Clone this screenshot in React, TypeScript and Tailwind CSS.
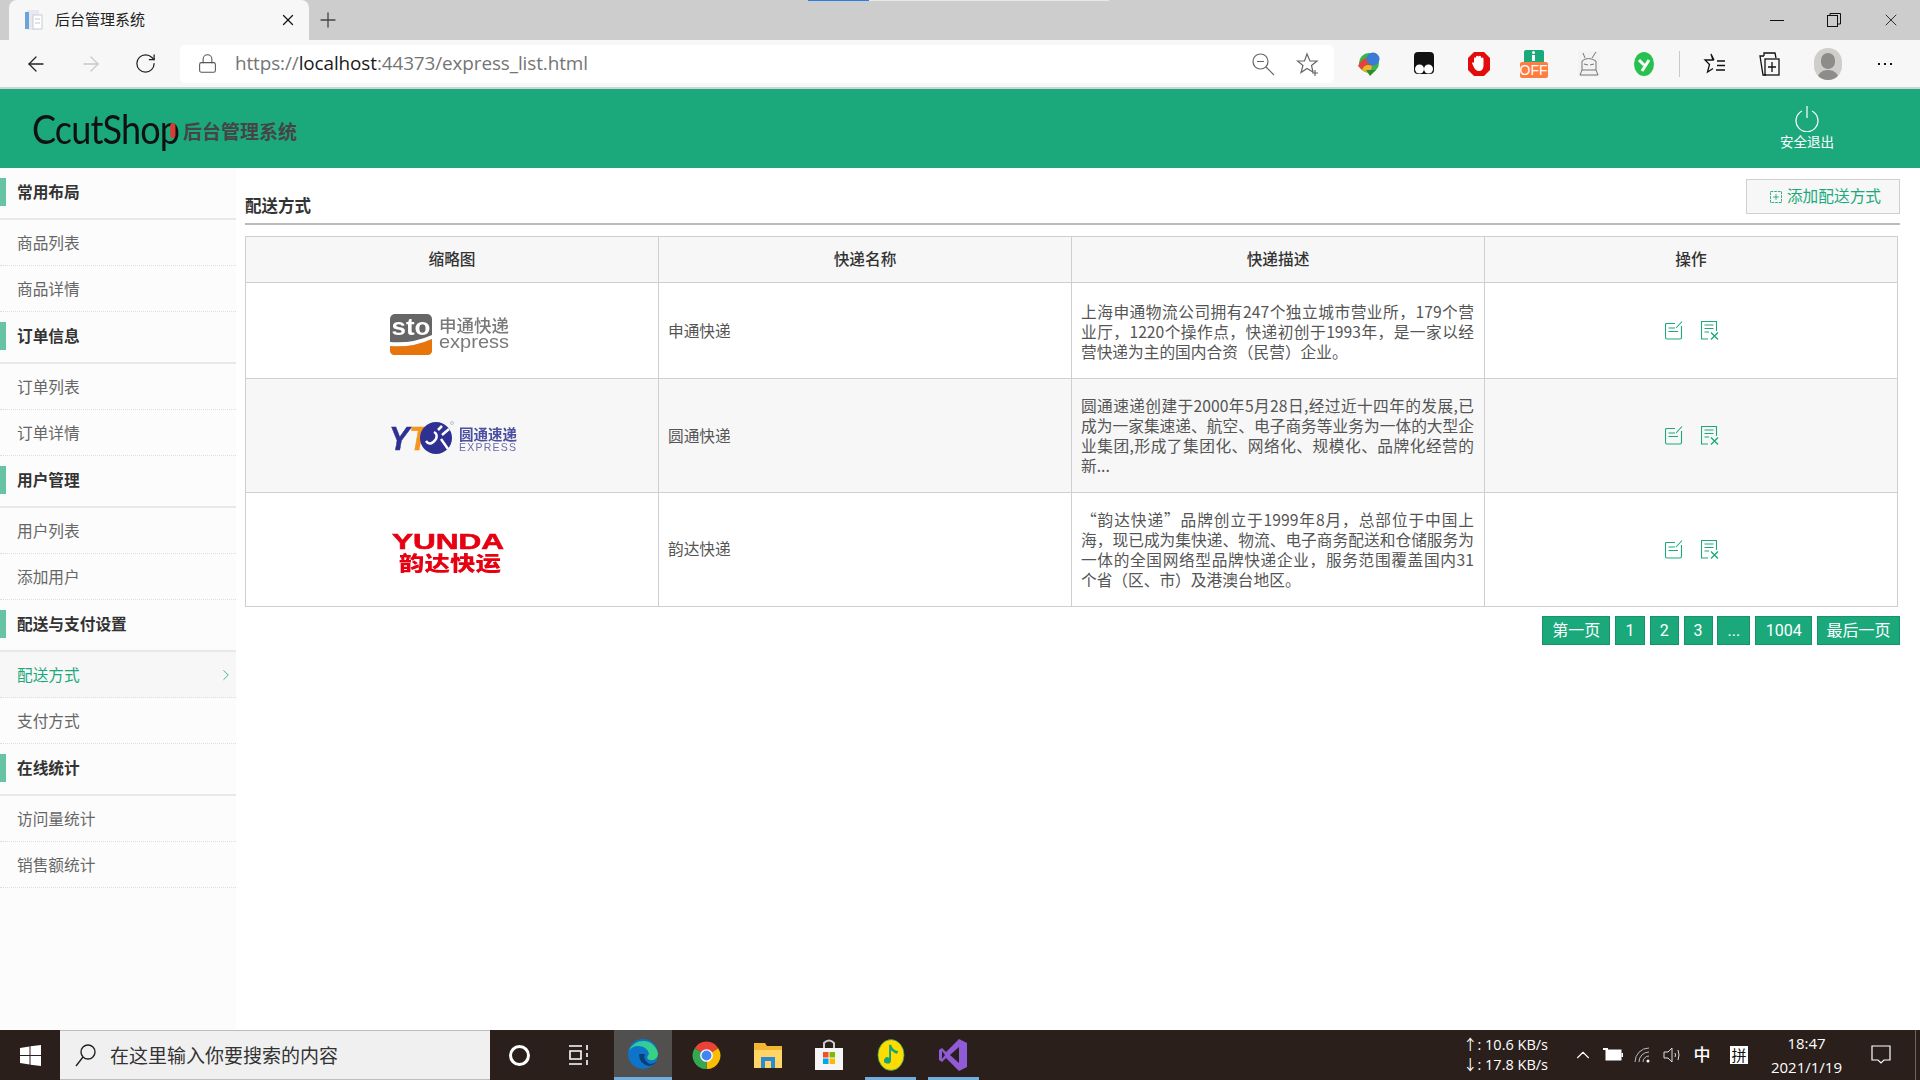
import React from "react";
import { ArrowLeft, ArrowRight, RotateCw, Lock, X, Plus, ChevronRight, ChevronUp } from "lucide-react";

const groups = [
  { title: "常用布局", items: ["商品列表", "商品详情"] },
  { title: "订单信息", items: ["订单列表", "订单详情"] },
  { title: "用户管理", items: ["用户列表", "添加用户"] },
  { title: "配送与支付设置", items: ["配送方式", "支付方式"] },
  { title: "在线统计", items: ["访问量统计", "销售额统计"] },
];

const StoLogo = () => (
  <svg width="140" height="60" viewBox="0 0 140 60" className="block mx-auto blur-[0.3px]">
    <rect x="8" y="13" width="42" height="41" rx="5" fill="#666666" />
    <path d="M8 45 Q30 47 50 38 V49 Q50 54 45 54 H13 Q8 54 8 49 Z" fill="#e8740c" />
    <path d="M8 41 Q30 43 50 34 V38 Q30 47 8 45 Z" fill="#ffffff" />
    <text x="9.500" y="34" fontFamily="Liberation Sans" fontWeight="700" fontSize="23" fill="#fff" textLength="39" lengthAdjust="spacingAndGlyphs">sto</text>
    <text x="57" y="31" fontFamily="Noto Sans CJK SC" fontWeight="500" fontSize="17.500" fill="#7a7a7a">申通快递</text>
    <text x="57" y="47" fontFamily="Liberation Sans" fontSize="19" fill="#7a7a7a" textLength="70" lengthAdjust="spacingAndGlyphs">express</text>
  </svg>
);

const YtoLogo = () => (
  <svg width="140" height="60" viewBox="0 0 140 60" className="block mx-auto blur-[0.3px]">
    <text x="7" y="44" fontFamily="Liberation Sans" fontWeight="700" fontStyle="italic" fontSize="34" stroke="#2e3192" strokeWidth="0.500" fill="#2e3192" textLength="39" lengthAdjust="spacingAndGlyphs">Y<tspan fill="#f7941d" stroke="#f7941d">T</tspan></text>
    <circle cx="54" cy="32" r="16" fill="#2e3192" />
    <path d="M44 35 Q48 41 54 33 Q56 28 52 26" fill="none" stroke="#fff" strokeWidth="2.500" />
    <path d="M56 24 L60 20 M60 29 L67 23 M59 33 L66 43" fill="none" stroke="#fff" strokeWidth="2.500" />
    <circle cx="70" cy="17" r="1.500" fill="none" stroke="#9a9ab5" strokeWidth="0.600" />
    <text x="77" y="34" fontFamily="Noto Sans CJK SC" fontWeight="700" fontSize="14.500" fill="#4a4f9f">圆通速递</text>
    <text x="77" y="45" fontFamily="Liberation Sans" fontSize="10.500" fill="#6a6ea8" textLength="57">EXPRESS</text>
  </svg>
);

const YundaLogo = () => (
  <svg width="140" height="60" viewBox="0 0 140 60" className="block mx-auto blur-[0.3px]">
    <text x="10" y="29" fontFamily="Liberation Sans" fontWeight="700" fontSize="22" fill="#e60012" textLength="112" lengthAdjust="spacingAndGlyphs" stroke="#e60012" strokeWidth="0.600">YUNDA</text>
    <text x="17" y="51" fontFamily="Noto Sans CJK SC" fontWeight="900" fontSize="20" fill="#e60012" textLength="102" lengthAdjust="spacingAndGlyphs">韵达快运</text>
  </svg>
);

const EditIcon = () => (
  <svg width="18" height="19" viewBox="0 0 18 19" fill="none" stroke="#1ba97c" strokeWidth="1.100">
    <path d="M10 2.500 H1.500 Q0.500 2.500 0.500 3.500 V16.500 Q0.500 18 2 18 H15 Q16.500 18 16.500 16.500 V5" />
    <path d="M11 7 L17 0.500" />
    <path d="M3.500 7 H10 M3.500 10.500 H13" />
  </svg>
);

const DeleteIcon = () => (
  <svg width="18" height="19" viewBox="0 0 18 19" fill="none" stroke="#1ba97c" strokeWidth="1.100">
    <path d="M7 18 H0.500 V0.500 H15.500 V10" />
    <path d="M3.500 4 H12.500 M3.500 7.500 H12.500 M3.500 11 H8" />
    <path d="M10 11.500 L17 18.500 M17 11.500 L10 18.500" strokeWidth="1.400" />
  </svg>
);

const Actions = () => (
  <div className="flex justify-center gap-[18px] pl-[2px] pb-[1px]">
    <EditIcon />
    <DeleteIcon />
  </div>
);

const rows = [
  {
    logo: <StoLogo />,
    name: "申通快递",
    desc: "上海申通物流公司拥有247个独立城市营业所\uFF0C179个营业厅\uFF0C1220个操作点\uFF0C快递初创于1993年\uFF0C是一家以经营快递为主的国内合资\uFF08民营\uFF09企业\u3002",
    tr: "h-[96px] bg-white",
    nameTd: "border border-[#cfcfcf] pt-[18px] pb-[15px] px-[9px]",
    descTd: "border border-[#cfcfcf] pt-[18px] pb-[15px] pl-[9px] pr-[10px] leading-[20px] text-justify font-['Noto_Sans_CJK_SC',sans-serif]",
  },
  {
    logo: <YtoLogo />,
    name: "圆通快递",
    desc: "圆通速递创建于2000年5月28日,经过近十四年的发展,已成为一家集速递\u3001航空\u3001电子商务等业务为一体的大型企业集团,形成了集团化\u3001网络化\u3001规模化\u3001品牌化经营的新...",
    tr: "h-[114px] bg-[#f7f7f7]",
    nameTd: "border border-[#cfcfcf] pt-[18px] pb-[15px] px-[9px]",
    descTd: "border border-[#cfcfcf] pt-[17px] pb-[16px] pl-[9px] pr-[10px] leading-[20px] text-justify font-['Noto_Sans_CJK_SC',sans-serif]",
  },
  {
    logo: <YundaLogo />,
    name: "韵达快递",
    desc: "\u201C韵达快递\u201D品牌创立于1999年8月\uFF0C总部位于中国上海\uFF0C现已成为集快递\u3001物流\u3001电子商务配送和仓储服务为一体的全国网络型品牌快递企业\uFF0C服务范围覆盖国内31个省\uFF08区\u3001市\uFF09及港澳台地区\u3002",
    tr: "h-[114px] bg-white",
    nameTd: "border border-[#cfcfcf] pt-[17px] pb-[16px] px-[9px]",
    descTd: "border border-[#cfcfcf] pt-[17px] pb-[16px] pl-[9px] pr-[10px] leading-[20px] text-justify font-['Noto_Sans_CJK_SC',sans-serif]",
  },
];

const pages = [
  { t: "第一页", c: "w-[68px]" },
  { t: "1", c: "w-[30px]" },
  { t: "2", c: "w-[29px]" },
  { t: "3", c: "w-[29px]" },
  { t: "...", c: "w-[33px]" },
  { t: "1004", c: "w-[57px]" },
  { t: "最后一页", c: "w-[83px]" },
];

const Slot = ({ children }: { children: React.ReactNode }) => (
  <div className="w-[55px] h-full flex items-center justify-center shrink-0">{children}</div>
);

const Toolbar = () => (
  <div className="h-[49px] bg-[#f7f7f7] border-b-2 border-[#d2d2d2] flex items-center shrink-0">
    <div className="w-[180px] flex items-center pl-[8px] shrink-0">
      <Slot><ArrowLeft size={24} strokeWidth={1.3} color="#222" /></Slot>
      <Slot><ArrowRight size={24} strokeWidth={1.3} color="#c8c8c8" /></Slot>
      <Slot><RotateCw size={23} strokeWidth={1.3} color="#222" /></Slot>
    </div>
    <div className="w-[1154px] h-[38px] bg-white rounded-[5px] flex items-center shrink-0">
      <div className="w-[55px] flex justify-center"><Lock size={21} strokeWidth={1.2} color="#555" /></div>
      <div className="text-[18.900px] text-[#757575] font-['Open_Sans',sans-serif] tracking-[-0.1px]">
        https://<span className="text-[#1a1a1a]">localhost</span>:44373/express_list.html
      </div>
      <div className="ml-auto flex items-center gap-[21px] pr-[14px]">
        <svg width="24" height="24" viewBox="0 0 24 24" fill="none" stroke="#666" strokeWidth="1.200"><circle cx="9.500" cy="9.500" r="7.500" /><path d="M15 15 L23 23 M6 9.500 H13" /></svg>
        <svg width="24" height="24" viewBox="0 0 24 24" fill="none" stroke="#666" strokeWidth="1.200"><path d="M11 2 L14 9 H21 L15.500 13.500 L17 20 L11 16.500 L5 20.500 L7 13.500 L1.500 9 H8.500 Z" /><path d="M19 18 V24 M16 21 H22" /></svg>
      </div>
    </div>
    <div className="flex items-center h-full pl-[7px]">
      <Slot>
        <svg width="24" height="26" viewBox="0 0 24 26">
          <circle cx="12" cy="12" r="10" fill="#39b54a" />
          <path d="M1 15 Q6 4 17 8 L15 15 Q8 12 5 19 Z" fill="#e2433b" />
          <path d="M5 19 Q8 12 15 15 L13 23 Z" fill="#f0b429" />
          <circle cx="16" cy="8" r="6.500" fill="#3a7bd5" />
          <path d="M9 19 H19 L13 25 Z" fill="#2e8b2e" />
        </svg>
      </Slot>
      <Slot>
        <svg width="24" height="25" viewBox="0 0 24 25">
          <rect x="2" y="1" width="20" height="22" rx="4" fill="#111" />
          <circle cx="7.500" cy="18" r="4.500" fill="#fff" />
          <circle cx="16.500" cy="18" r="4.500" fill="#fff" />
        </svg>
      </Slot>
      <Slot>
        <svg width="24" height="26" viewBox="0 0 24 26">
          <path d="M7 1 H17 L23 7 V19 L17 25 H7 L1 19 V7 Z" fill="#e30b0b" />
          <path d="M7 12 V7 Q8 5.500 9 7 V5.500 Q10.500 4 11.500 5.500 Q13 4 14 5.500 V7 Q15.500 6 16.500 7.500 V15 Q16 20 12 20 Q8.500 20 6.500 15.500 L5 12 Q6 10.500 7 12 Z" fill="#fff" />
        </svg>
      </Slot>
      <Slot>
        <div className="w-[28px] h-[28px] flex flex-col items-center">
          <div className="w-[20px] h-[12px] bg-[#1ba97c] rounded-t-[2px] flex flex-col items-center gap-[1px]">
            <div className="w-[3px] h-[3px] bg-white rounded-full mt-[1px]" />
            <div className="w-[3px] h-[6px] bg-white" />
          </div>
          <div className="w-[28px] h-[16px] bg-[#ff7d3f] rounded-[2px] text-white text-[14px] leading-[16px] text-center font-['Liberation_Sans',sans-serif]">OFF</div>
        </div>
      </Slot>
      <Slot>
        <svg width="22" height="26" viewBox="0 0 22 26" fill="none" stroke="#666" strokeWidth="0.900">
          <rect width="22" height="26" fill="#f3f3f3" stroke="none" />
          <path d="M7 7 L5 2 M14 7 L18 1 M4 10 Q10 5 18 10 L18 19 H4 Z M6 13 L10 14 M12 14 L16 13 M2 24 H20 M4 19 L2 24 M18 19 L20 24" />
        </svg>
      </Slot>
      <Slot>
        <svg width="22" height="26" viewBox="0 0 22 26">
          <ellipse cx="11" cy="13" rx="10" ry="12" fill="#28c04e" />
          <path d="M6 9 L11 14 M16 9 L9 20" stroke="#fff" strokeWidth="3" fill="none" />
        </svg>
      </Slot>
      <div className="w-[1px] h-[26px] bg-[#c9c9c9] ml-[8px] mr-[7px]" />
      <Slot>
        <svg width="24" height="24" viewBox="0 0 24 24" fill="none" stroke="#111" strokeWidth="1.300">
          <path d="M8 2 L10 8 H2 L6.500 12.500 L4.500 20 L10 16.500 M8 2 L11 8 M14 9 H22 M14 13.500 H22 M13 18 H22" />
        </svg>
      </Slot>
      <Slot>
        <svg width="24" height="26" viewBox="0 0 24 26" fill="none" stroke="#111" strokeWidth="1.300">
          <path d="M6 5 V2 H17 L18 7 M6 5 H2 L5 24 H8" />
          <rect x="7" y="8" width="14" height="16" />
          <path d="M14 11 V21 M10 16 H18" />
        </svg>
      </Slot>
      <div className="w-[3px] shrink-0" />
      <Slot>
        <div className="w-[28px] h-[32px] rounded-full bg-[#cfcecb] flex flex-col items-center justify-end overflow-hidden">
          <div className="w-[14px] h-[16px] rounded-full bg-[#8e8c8a]" />
          <div className="w-[22px] h-[10px] mt-[1px] rounded-t-full bg-[#8e8c8a]" />
        </div>
      </Slot>
      <div className="w-[2px] shrink-0" />
      <Slot>
        <div className="flex gap-[4px]">
          <div className="w-[2px] h-[2px] bg-[#111]" />
          <div className="w-[2px] h-[2px] bg-[#111]" />
          <div className="w-[2px] h-[2px] bg-[#111]" />
        </div>
      </Slot>
    </div>
  </div>
);

const Taskbar = () => (
  <div className="h-[50px] bg-[#2a1f1b] flex items-center shrink-0 relative font-['Open_Sans','Noto_Sans_CJK_SC',sans-serif]">
    <div className="w-[60px] flex justify-center">
      <svg width="21" height="21" viewBox="0 0 21 21" fill="#fff"><path d="M0 3 L9.500 1.500 V10 H0 Z M10.500 1.300 L21 0 V10 H10.500 Z M0 11 H9.500 V19.500 L0 18 Z M10.500 11 H21 V21 L10.500 19.700 Z" /></svg>
    </div>
    <div className="w-[430px] h-full bg-[#f0f0f0] border-y border-[#bdbdbd] flex items-center">
      <svg className="ml-[14px]" width="24" height="24" viewBox="0 0 24 24" fill="none" stroke="#222" strokeWidth="1.400"><circle cx="14" cy="9" r="7" /><path d="M9 14 L2 23" /></svg>
      <span className="ml-[12px] text-[19px] text-[#333] font-['Noto_Sans_CJK_SC',sans-serif]">在这里输入你要搜索的内容</span>
    </div>
    <div className="w-[58px] flex justify-center">
      <div className="w-[21px] h-[21px] rounded-full border-[3px] border-white" />
    </div>
    <div className="w-[66px] flex justify-center pr-[4px]">
      <svg width="22" height="22" viewBox="0 0 22 22" fill="none" stroke="#fff" strokeWidth="1.600"><path d="M1 2 H14 M1 20 H14 M2 7 H13 V15 H2 Z M19 1 V6 M19 9 V13 M19 16 V21" /></svg>
    </div>
    <div className="w-[58px] h-full bg-[#52504e] border-b-[3px] border-[#6eaee0] flex items-center justify-center">
      <svg width="32" height="32" viewBox="0 0 32 32">
        <defs>
          <linearGradient id="edgeA" x1="0" y1="0" x2="1" y2="1"><stop offset="0" stopColor="#2dc9a8" /><stop offset="1" stopColor="#3bd47a" /></linearGradient>
        </defs>
        <circle cx="16" cy="16" r="15" fill="#0d74c9" />
        <path d="M2 13 A15 15 0 0 1 31 16 Q30 23 23 22 Q18 21 22 16 Q20 8 11 8 Q5 8 2 13 Z" fill="url(#edgeA)" />
        <path d="M12 16 Q12 26 22 28 Q27 27 29 24 Q23 28 20 24 Q16 20 18 16 Z" fill="#0b3f78" />
      </svg>
    </div>
    <div className="w-[62px] ml-[3px] flex justify-center">
      <svg width="29" height="29" viewBox="0 0 32 32">
        <path d="M16 16 L3 8 A15 15 0 0 1 29 8 Z" fill="#ea4335" />
        <path d="M16 16 L29 8 A15 15 0 0 1 16 31 Z" fill="#fbbc05" />
        <path d="M16 16 L16 31 A15 15 0 0 1 3 8 Z" fill="#34a853" />
        <circle cx="16" cy="16" r="7" fill="#fff" />
        <circle cx="16" cy="16" r="5.500" fill="#4285f4" />
      </svg>
    </div>
    <div className="w-[60px] ml-[1px] flex justify-center">
      <svg width="30" height="28" viewBox="0 0 30 28">
        <path d="M1 2 H12 L14 5 H29 V27 H1 Z" fill="#f2b632" />
        <path d="M1 9 H29 V27 H1 Z" fill="#ffd666" />
        <path d="M8 27 V16 H22 V27 H18 V20 H12 V27 Z" fill="#2a8ad4" />
      </svg>
    </div>
    <div className="w-[62px] flex justify-center">
      <svg width="30" height="32" viewBox="0 0 30 32">
        <path d="M10 9 V4 Q15 -1 20 4 V9" fill="none" stroke="#ccc" strokeWidth="2" />
        <path d="M1 9 H29 V31 H1 Z" fill="#f5f5f5" />
        <rect x="9" y="13" width="5.500" height="5.500" fill="#f25022" />
        <rect x="15.500" y="13" width="5.500" height="5.500" fill="#7fba00" />
        <rect x="9" y="19.500" width="5.500" height="5.500" fill="#00a4ef" />
        <rect x="15.500" y="19.500" width="5.500" height="5.500" fill="#ffb900" />
      </svg>
    </div>
    <div className="w-[62px] h-full flex items-center justify-center relative">
      <svg width="28" height="34" viewBox="0 0 30 34">
        <ellipse cx="15" cy="17" rx="14" ry="16.500" fill="#ffdc00" stroke="#1d9e6b" strokeWidth="0.800" />
        <path d="M15 6 V22 Q15 27 10 26 Q6 25 8 21 Q10 18 13 20 V6 Z M15 6 Q17 12 23 13 L21 16 Q17 14 15 12 Z" fill="#12a579" />
      </svg>
      <div className="absolute bottom-0 left-[5px] w-[51px] h-[3px] bg-[#6eaee0]" />
    </div>
    <div className="w-[62px] h-full flex items-center justify-center relative">
      <svg width="30" height="34" viewBox="0 0 30 34">
        <path d="M21 1 L29 5 V29 L21 33 L8 20 L4 24 L1 22 V12 L4 10 L8 14 Z" fill="#8f5bd6" />
        <path d="M21 9 L12 17 L21 25 Z" fill="#2a1f1b" />
        <path d="M4 13 L7 17 L4 21 Z" fill="#2a1f1b" />
      </svg>
      <div className="absolute bottom-0 left-[6px] w-[51px] h-[3px] bg-[#6eaee0]" />
    </div>
    <div className="ml-auto flex items-center h-full text-white">
      <div className="w-[82px] text-[14.500px] leading-[20px] mr-[24px] whitespace-nowrap">
        <div>↑: 10.6 KB/s</div>
        <div>↓: 17.8 KB/s</div>
      </div>
      <div className="w-[28px] flex justify-center"><ChevronUp size={22} strokeWidth={1.2} color="#fff" /></div>
      <div className="w-[32px] flex justify-center">
        <svg width="20" height="14" viewBox="0 0 20 14"><rect x="3" y="2" width="15" height="10" fill="#fff" stroke="#fff" /><rect x="18.500" y="5" width="1.500" height="4" fill="#fff" /><path d="M0 1 H5" stroke="#fff" strokeWidth="2" /></svg>
      </div>
      <div className="w-[28px] flex justify-center">
        <svg width="18" height="16" viewBox="0 0 18 16" fill="none" stroke="#bbb" strokeWidth="1"><path d="M1 15 A14 14 0 0 1 15 1 M5 15 A10 10 0 0 1 15 5 M9 15 A6 6 0 0 1 15 9" /><circle cx="14" cy="14" r="1.500" fill="#fff" stroke="none" /></svg>
      </div>
      <div className="w-[31px] flex justify-center">
        <svg width="20" height="16" viewBox="0 0 20 16" fill="none" stroke="#ddd" strokeWidth="1"><path d="M1 5 H5 L9 1 V15 L5 11 H1 Z M12 6 Q13 8 12 10 M15 3 Q17 8 15 13" /></svg>
      </div>
      <div className="w-[28px] text-center text-[17px] font-medium">中</div>
      <div className="w-[46px] flex justify-center">
        <div className="w-[18px] h-[18px] bg-white text-[#111] text-[15px] leading-[18px] text-center">拼</div>
      </div>
      <div className="w-[89px] text-[15px] leading-[24px] text-center">
        <div>18:47</div>
        <div>2021/1/19</div>
      </div>
      <div className="w-[59px] flex justify-center">
        <svg width="20" height="20" viewBox="0 0 20 20" fill="none" stroke="#fff" strokeWidth="1.200"><path d="M1 1 H19 V15 H13 L10 18 L7 15 H1 Z" /></svg>
      </div>
      <div className="w-[10px] h-full flex justify-center"><div className="w-[1px] h-full bg-[#6d6560]" /></div>
    </div>
  </div>
);

export default function App() {
  return (
    <div className="w-full h-screen flex flex-col overflow-hidden bg-white font-['Roboto','Noto_Sans_CJK_SC',sans-serif] text-[15.700px] text-[#555]">
      <div className="h-10 bg-[#cdcdcd] flex pl-[9px] shrink-0 relative">
        <div className="absolute top-0 left-[808px] w-[61px] h-[1px] bg-[#2a7de1]" />
        <div className="absolute top-0 left-[869px] w-[240px] h-[1px] bg-[#e8e8e8]" />
        <div className="w-[300px] h-10 bg-[#f7f7f7] rounded-t-lg flex items-center">
          <svg className="ml-[15px]" width="20" height="22" viewBox="0 0 20 22">
            <rect x="3" y="1" width="12" height="20" fill="#e6e9ee" />
            <rect x="1" y="3" width="4" height="17" fill="#6aa5da" />
            <rect x="9" y="6" width="9" height="14" fill="#fff" stroke="#c8ccd4" />
            <path d="M11 10 H16 M11 14 H16" stroke="#c0c6d0" />
          </svg>
          <span className="ml-[11px] text-[15px] text-[#222]">后台管理系统</span>
          <X className="ml-auto mr-[12px]" size={18} strokeWidth={1.6} color="#111" />
        </div>
        <div className="w-[38px] flex items-center justify-center">
          <Plus size={24} strokeWidth={1.3} color="#444" />
        </div>
        <div className="ml-auto flex items-center pr-[1px]">
          <div className="w-[57px] flex justify-center"><div className="w-[14px] h-[1px] bg-[#111]" /></div>
          <div className="w-[57px] flex justify-center">
            <svg width="14" height="14" viewBox="0 0 14 14" fill="none" stroke="#111" strokeWidth="1"><rect x="0.500" y="2.500" width="10" height="11" /><path d="M3 2.500 V0.500 H13.500 V11 H10.500" /></svg>
          </div>
          <div className="w-[57px] flex justify-center"><X size={20} strokeWidth={1} color="#111" /></div>
        </div>
      </div>

      <Toolbar />

      <div className="h-[79px] bg-[#1ba97c] flex items-center shrink-0 pl-[32px] relative">
        <div className="w-[149px] relative text-[41px] leading-none text-[#111] font-['Lato',sans-serif] tracking-[-1px] -mt-[1px] scale-x-[0.88] origin-left whitespace-nowrap">
          CcutShop
          <div className="absolute left-[157px] top-[15px] w-[6px] h-[15px] rounded-full bg-[#d33f35]" />
        </div>
        <div className="ml-[2px] mt-[9px] text-[19px] font-bold text-[#454545]">后台管理系统</div>
        <div className="ml-auto mr-[86px] flex flex-col items-center text-white text-[13.500px] leading-[16px] -mt-[1px]">
          <svg width="26" height="26" viewBox="0 0 26 26" fill="none" stroke="#fff" strokeWidth="1.200"><path d="M8 5 A11 11 0 1 0 18 5 M13 0 V12" /></svg>
          <span className="mt-[2px]">安全退出</span>
        </div>
      </div>

      <div className="flex-1 flex min-h-0">
        <aside className="w-[236px] shrink-0 bg-[#fcfcfc]">
          {groups.map((g) => (
            <div key={g.title}>
              <div className="h-[52px] border-b-2 border-[#e8e8e8] flex items-center font-bold text-[#333]">
                <div className="w-[6px] h-[28px] bg-[#66c3a4] -mt-[2px]" />
                <span className="ml-[11px]">{g.title}</span>
              </div>
              {g.items.map((it) => {
                const active = it === "配送方式";
                return (
                  <div key={it} className={active ? "h-[46px] border-b border-dotted border-[#ddd] flex items-center pl-[17px] pt-[2px] bg-[#f7f7f7] text-[#1ba97c]" : "h-[46px] border-b border-dotted border-[#ddd] flex items-center pl-[17px] pt-[2px] text-[#666]"}>
                    <span>{it}</span>
                    {active && <ChevronRight className="ml-auto mr-[1px] -mt-[2px]" size={18} strokeWidth={1.1} color="#1ba97c" />}
                  </div>
                );
              })}
            </div>
          ))}
        </aside>

        <main className="flex-1 pl-[9px] pr-[20px] pt-[11px]">
          <div className="h-[46px] border-b-2 border-[#bbb] flex justify-between">
            <div className="pt-[16px] font-bold text-[#333] text-[16.500px]">配送方式</div>
            <div className="w-[154px] h-[35px] border border-[#cfcfcf] bg-[#f7f7f7] text-[#1ba97c] flex items-center justify-center gap-[5px] pl-[5px]">
              <svg width="12" height="12" viewBox="0 0 13 13" fill="none" stroke="#1ba97c" strokeWidth="1"><rect x="0.500" y="0.500" width="12" height="12" strokeDasharray="3 1" /><path d="M6.500 3.500 V9.500 M3.500 6.500 H9.500" /></svg>
              <span className="mt-[1px]">添加配送方式</span>
            </div>
          </div>
          <table className="w-[1653px] mt-[11px] table-fixed border-collapse">
            <thead>
              <tr className="h-[46px] bg-[#f7f7f7] text-[#333]">
                {["缩略图", "快递名称", "快递描述", "操作"].map((h) => (
                  <th key={h} className="border border-[#cfcfcf] font-medium text-center">{h}</th>
                ))}
              </tr>
            </thead>
            <tbody>
              {rows.map((r) => (
                <tr key={r.name} className={r.tr}>
                  <td className="border border-[#cfcfcf] p-0">{r.logo}</td>
                  <td className={r.nameTd}>{r.name}</td>
                  <td className={r.descTd}>{r.desc}</td>
                  <td className="border border-[#cfcfcf] p-0"><Actions /></td>
                </tr>
              ))}
            </tbody>
          </table>
          <div className="mt-[9px] flex justify-end gap-[4.800px]">
            {pages.map((p) => (
              <div key={p.t} className={"h-[29px] bg-[#1ba97c] border border-[#17936c] text-white text-center text-[16px] leading-[27px] " + p.c}>{p.t}</div>
            ))}
          </div>
        </main>
      </div>

      <Taskbar />
    </div>
  );
}
